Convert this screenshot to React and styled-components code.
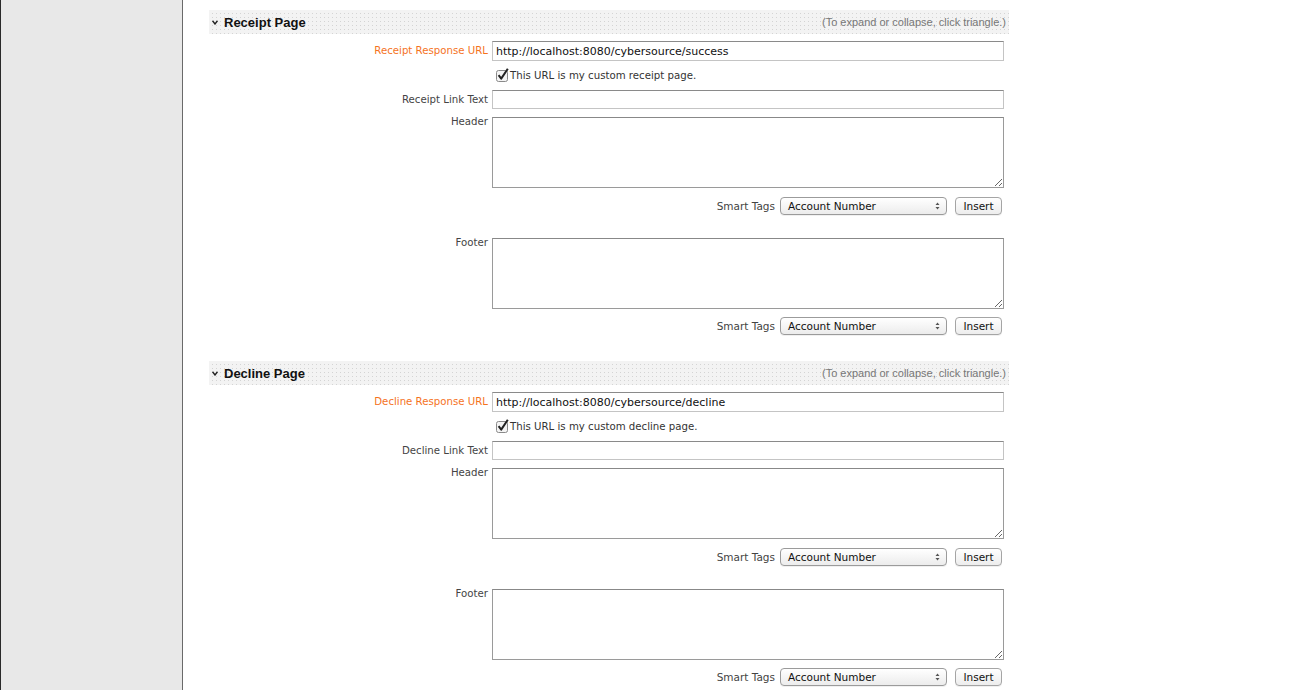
import React from "react";
import styled, { createGlobalStyle } from "styled-components";

const Global = createGlobalStyle`
  html, body { margin: 0; padding: 0; background: #fff; }
  body { font-family: "DejaVu Sans", sans-serif; width: 1302px; height: 690px; overflow: hidden; }
`;

const Page = styled.div`
  display: flex;
  height: 690px;
`;

const Sidebar = styled.div`
  width: 181px;
  flex: none;
  background: #e8e8e8;
  border-left: 1px solid #2a2a2a;
  border-right: 1px solid #6a6a6a;
`;

const Main = styled.div`
  padding: 10px 0 0 26px;
  width: 800px;
`;

const Section = styled.section`
  margin-top: ${(p) => p.$top || 0}px;
`;

const Bar = styled.div`
  height: 24px;
  display: flex;
  align-items: center;
  padding: 0 3px 0 3px;
  background-color: #f3f3f3;
  background-image: linear-gradient(to right, #f3f3f3 3px, transparent 3px),
    linear-gradient(to bottom, #f3f3f3 3px, #d4d4d4 3px);
  background-size: 4px 4px, 4px 4px;
`;

const Toggle = styled.svg`
  width: 6px;
  height: 5px;
  margin: 1px 6px 0 0;
  flex: none;
`;

const Title = styled.h2`
  margin: 0;
  font-family: "Liberation Sans", Arial, sans-serif;
  font-size: 13px;
  font-weight: bold;
  color: #111;
  flex: 1;
`;

const Hint = styled.span`
  font-family: "Liberation Sans", Arial, sans-serif;
  font-size: 11px;
  color: #777;
`;

const Row = styled.div`
  display: grid;
  grid-template-columns: 279px 512px;
  column-gap: 4px;
  align-items: ${(p) => (p.$top ? "start" : "center")};
  margin-top: ${(p) => p.$mt}px;
`;

const Label = styled.label`
  text-align: right;
  font-size: 10.2px;
  color: ${(p) => (p.$accent ? "#f5731e" : "#444")};
  margin-top: ${(p) => (p.$top ? -2 : 0)}px;
  line-height: 14px;
`;

const TextInput = styled.input`
  box-sizing: border-box;
  width: 512px;
  height: ${(p) => p.$h || 20}px;
  border: 1px solid #c4c4c4;
  border-top-color: #8a8a8a;
  padding: 0 3px;
  font-family: "DejaVu Sans", sans-serif;
  font-size: 11px;
  color: #111;
  outline: none;
  margin: 0;
`;

const Area = styled.textarea`
  box-sizing: border-box;
  width: 512px;
  height: 71px;
  border: 1px solid #9a9a9a;
  border-top-color: #888;
  margin: 0;
  resize: both;
  font-family: "DejaVu Sans", sans-serif;
  font-size: 10px;
  outline: none;
`;

const CheckLine = styled.div`
  grid-column: 2;
  display: flex;
  align-items: center;
  height: 16px;
  padding-left: 4px;
  font-size: 10.2px;
  color: #333;
`;

const Check = styled.svg`
  width: 14px;
  height: 14px;
  flex: none;
`;

const ToolsRow = styled.div`
  display: flex;
  justify-content: flex-end;
  align-items: center;
  width: 793px;
  height: 19px;
  margin-top: ${(p) => p.$mt}px;
  font-size: 10.5px;
  color: #444;
`;

const ToolsLabel = styled.span`
  margin-right: 5px;
`;

const Select = styled.div`
  box-sizing: border-box;
  width: 167px;
  height: 18px;
  border: 1px solid #9b9b9b;
  border-radius: 4px;
  background: linear-gradient(#ffffff, #ececec);
  display: flex;
  align-items: center;
  padding: 0 6px 0 7px;
  font-size: 10.5px;
  color: #111;
  box-shadow: 0 1px 0 rgba(0,0,0,0.06);
`;

const SelectText = styled.span`
  flex: 1;
`;

const Arrows = styled.svg`
  width: 5px;
  height: 8px;
`;

const Button = styled.button`
  box-sizing: border-box;
  margin-left: 8px;
  width: 47px;
  height: 18px;
  border: 1px solid #a5a5a5;
  border-radius: 4px;
  background: linear-gradient(#ffffff, #ededed);
  font-family: "DejaVu Sans", sans-serif;
  font-size: 10.5px;
  color: #111;
  padding: 0;
  box-shadow: 0 1px 0 rgba(0,0,0,0.06);
`;

function SmartTags({ mt }) {
  return (
    <ToolsRow $mt={mt}>
      <ToolsLabel>Smart Tags</ToolsLabel>
      <Select>
        <SelectText>Account Number</SelectText>
        <Arrows viewBox="0 0 5 8">
          <path d="M0.5 3 L2.5 0.5 L4.5 3 Z M0.5 5 L2.5 7.5 L4.5 5 Z" fill="#555" />
        </Arrows>
      </Select>
      <Button>Insert</Button>
    </ToolsRow>
  );
}

function PageSection({ top, title, kind, url }) {
  return (
    <Section $top={top}>
      <Bar>
        <Toggle viewBox="0 0 6 5">
          <path d="M0.5 0.8 L3 4 L5.5 0.8" fill="none" stroke="#222" strokeWidth="1.4" />
        </Toggle>
        <Title>{title} Page</Title>
        <Hint>(To expand or collapse, click triangle.)</Hint>
      </Bar>
      <Row $mt={7}>
        <Label $accent>{title} Response URL</Label>
        <TextInput defaultValue={url} />
      </Row>
      <Row $mt={6}>
        <CheckLine>
          <Check viewBox="0 0 14 14">
            <rect x="0.5" y="2.5" width="11" height="11" rx="2" fill="#f4f4f4" stroke="#8a8a8a" />
            <path d="M2.6 7.2 L5.2 10.6 L11.8 0.8" fill="none" stroke="#222" strokeWidth="2" strokeLinejoin="round" />
          </Check>
          This URL is my custom {kind} page.
        </CheckLine>
      </Row>
      <Row $mt={7}>
        <Label>{title} Link Text</Label>
        <TextInput $h={19} />
      </Row>
      <Row $mt={8} $top>
        <Label $top>Header</Label>
        <Area />
      </Row>
      <SmartTags mt={8} />
      <Row $mt={23} $top>
        <Label $top>Footer</Label>
        <Area />
      </Row>
      <SmartTags mt={7} />
    </Section>
  );
}

export default function App() {
  return (
    <Page>
      <Global />
      <Sidebar />
      <Main>
        <PageSection title="Receipt" kind="receipt" url="http://localhost:8080/cybersource/success" />
        <PageSection top={26} title="Decline" kind="decline" url="http://localhost:8080/cybersource/decline" />
      </Main>
    </Page>
  );
}
